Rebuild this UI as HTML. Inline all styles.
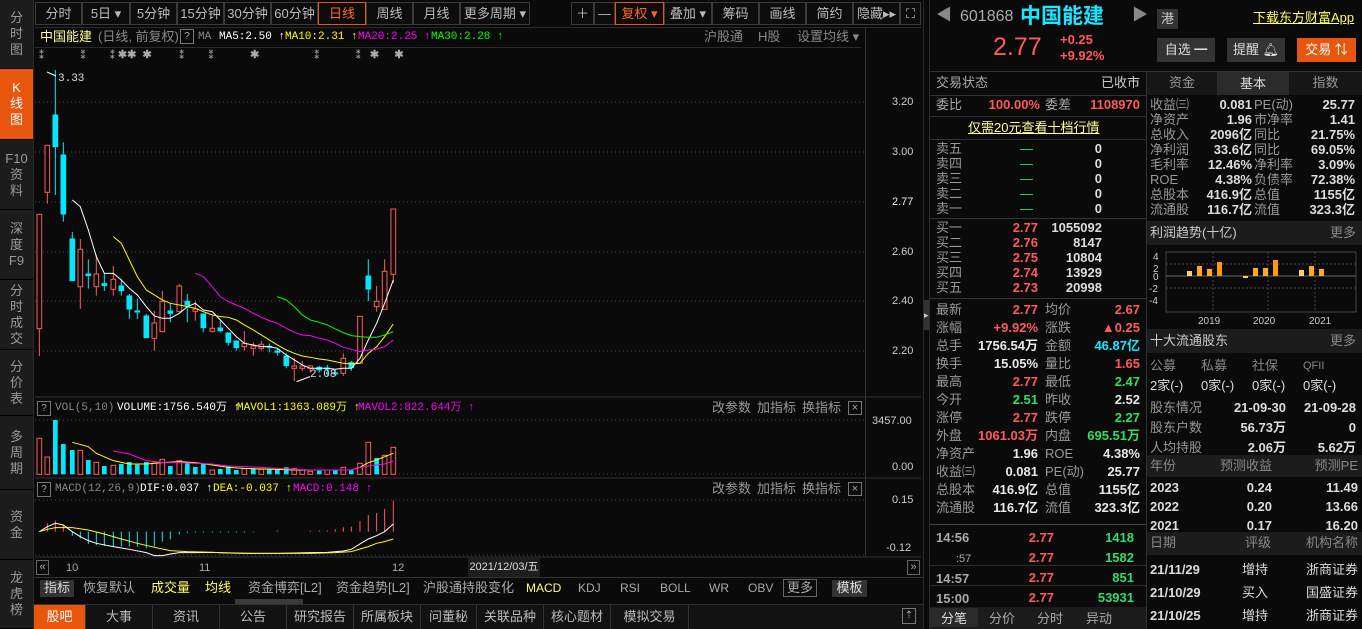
<!DOCTYPE html>
<html><head><meta charset="utf-8">
<style>
*{margin:0;padding:0;box-sizing:border-box}
body{width:1362px;height:629px;background:#0a0a0a;overflow:hidden;position:relative;font-family:"Liberation Sans","Noto Sans CJK SC",sans-serif;font-size:13px;color:#a8a8a8}
.a{position:absolute;white-space:nowrap;line-height:16px}
.r{text-align:right}
.side{position:absolute;left:0;width:33px;background:#1c1c1c;border-bottom:1px solid #000;color:#9a9a9a;font-size:13px;text-align:center;line-height:16px;display:flex;align-items:center;justify-content:center}
.tb{position:absolute;top:2px;height:23px;border:1px solid #3a3a3a;background:#0c0c0c;color:#bbb;font-size:13px;line-height:21px;text-align:center}
.red{color:#ff5a5a}.grn{color:#33dd66}.wht{color:#e8e8e8}.cyn{color:#19e6ff}.yel{color:#ffff66}
.hl{position:absolute;height:1px;background:#333}
.vl{position:absolute;width:1px;background:#333}
.b{font-weight:bold}
.sec{position:absolute;background:#1c1c1c}
.btab{position:absolute;top:605px;height:24px;line-height:24px;text-align:center;color:#bbb;border-right:1px solid #333;background:#121212}
</style></head><body>

<!-- left sidebar -->
<div class="side" style="top:0;height:69px">分<br>时<br>图</div>
<div class="side" style="top:69px;height:71px;background:#e8560d;color:#fff">K<br>线<br>图</div>
<div class="side" style="top:140px;height:70px">F10<br>资<br>料</div>
<div class="side" style="top:210px;height:70px">深<br>度<br>F9</div>
<div class="side" style="top:280px;height:70px">分<br>时<br>成<br>交</div>
<div class="side" style="top:350px;height:66px">分<br>价<br>表</div>
<div class="side" style="top:416px;height:74px">多<br>周<br>期</div>
<div class="side" style="top:490px;height:70px">资<br>金</div>
<div class="side" style="top:560px;height:69px">龙<br>虎<br>榜</div>
<div class="vl" style="left:33px;top:0;height:629px;background:#2a2a2a"></div>

<!-- toolbar -->
<div class="tb" style="left:35px;width:47px">分时</div>
<div class="tb" style="left:82px;width:48px">5日 ▾</div>
<div class="tb" style="left:130px;width:47px">5分钟</div>
<div class="tb" style="left:177px;width:47px">15分钟</div>
<div class="tb" style="left:224px;width:47px">30分钟</div>
<div class="tb" style="left:271px;width:47px">60分钟</div>
<div class="tb" style="left:318px;width:48px;border-color:#e8560d;color:#ff6a1a">日线</div>
<div class="tb" style="left:366px;width:47px">周线</div>
<div class="tb" style="left:413px;width:47px">月线</div>
<div class="tb" style="left:460px;width:70px">更多周期 ▾</div>
<div class="tb" style="left:571px;width:23px">＋</div>
<div class="tb" style="left:594px;width:21px">—</div>
<div class="tb" style="left:615px;width:49px;border-color:#e8560d;color:#ff6a1a">复权 ▾</div>
<div class="tb" style="left:664px;width:48px">叠加 ▾</div>
<div class="tb" style="left:712px;width:47px">筹码</div>
<div class="tb" style="left:759px;width:47px">画线</div>
<div class="tb" style="left:806px;width:47px">简约</div>
<div class="tb" style="left:853px;width:47px">隐藏▸▸</div>
<div class="tb" style="left:900px;width:21px">⛶</div>

<!-- chart header -->
<div class="hl" style="left:35px;top:27px;width:886px;background:#2a2a2a"></div>
<div class="a" style="left:40px;top:29px;color:#ffff99">中国能建</div>
<div class="a" style="left:98px;top:29px;color:#888">(日线, 前复权)</div>
<div class="a" style="left:180px;top:29px;width:14px;height:15px;border:1px solid #777;font-size:10px;line-height:13px;text-align:center;color:#aaa">?</div>
<div class="a" style="left:198px;top:29px;font-family:'Liberation Mono',monospace;font-size:11px;color:#888">MA</div>
<div class="a" style="left:219px;top:29px;font-family:'Liberation Mono',monospace;font-size:11px;color:#fff">MA5:2.50 ↑</div>
<div class="a" style="left:285px;top:29px;font-family:'Liberation Mono',monospace;font-size:11px;color:#ff0">MA10:2.31 ↑</div>
<div class="a" style="left:358px;top:29px;font-family:'Liberation Mono',monospace;font-size:11px;color:#f0f">MA20:2.25 ↑</div>
<div class="a" style="left:431px;top:29px;font-family:'Liberation Mono',monospace;font-size:11px;color:#0f0">MA30:2.28 ↑</div>
<div class="a" style="left:704px;top:29px;color:#888">沪股通</div>
<div class="a" style="left:758px;top:29px;color:#888">H股</div>
<div class="a" style="left:797px;top:29px;color:#888">设置均线 ▾</div>
<div class="hl" style="left:35px;top:47px;width:826px;background:#2a2a2a"></div>
<div class="vl" style="left:865px;top:27px;height:530px"></div>
<div class="a" style="left:36px;top:47px;color:#aaa;font-size:11px;font-weight:bold;letter-spacing:0">⁑&nbsp;&nbsp;&nbsp;&nbsp;&nbsp;&nbsp;&nbsp;&nbsp;&nbsp;&nbsp;⁑&nbsp;&nbsp;&nbsp;&nbsp;&nbsp;&nbsp;⁑✱✱&nbsp;&nbsp;✱&nbsp;&nbsp;&nbsp;&nbsp;&nbsp;&nbsp;&nbsp;&nbsp;⁑&nbsp;&nbsp;&nbsp;&nbsp;&nbsp;&nbsp;⁑&nbsp;&nbsp;&nbsp;&nbsp;&nbsp;&nbsp;&nbsp;&nbsp;&nbsp;&nbsp;&nbsp;✱&nbsp;&nbsp;&nbsp;&nbsp;&nbsp;&nbsp;&nbsp;&nbsp;&nbsp;&nbsp;&nbsp;&nbsp;&nbsp;&nbsp;&nbsp;&nbsp;&nbsp;⁑&nbsp;&nbsp;&nbsp;&nbsp;&nbsp;&nbsp;&nbsp;&nbsp;&nbsp;&nbsp;⁑&nbsp;&nbsp;✱&nbsp;&nbsp;&nbsp;&nbsp;&nbsp;✱</div>

<!-- axis labels -->
<div class="a wht" style="left:892px;top:94px;font-size:11px;color:#ccc">3.20</div>
<div class="a" style="left:892px;top:144px;font-size:11px;color:#ccc">3.00</div>
<div class="a" style="left:892px;top:194px;font-size:11px;color:#eee">2.77</div>
<div class="a" style="left:892px;top:244px;font-size:11px;color:#ccc">2.60</div>
<div class="a" style="left:892px;top:293px;font-size:11px;color:#ccc">2.40</div>
<div class="a" style="left:892px;top:343px;font-size:11px;color:#ccc">2.20</div>
<div class="a" style="left:872px;top:413px;font-size:11px;color:#ccc">3457.00</div>
<div class="a" style="left:892px;top:459px;font-size:11px;color:#ccc">0.00</div>
<div class="a" style="left:892px;top:492px;font-size:11px;color:#ccc">0.15</div>
<div class="a" style="left:886px;top:540px;font-size:11px;color:#ccc">-0.12</div>

<svg style="position:absolute;left:0;top:0" width="930" height="629">
<g stroke="#4a4a4a" stroke-dasharray="1,3">
<line x1="35" x2="865" y1="102" y2="102"/><line x1="35" x2="865" y1="152" y2="152"/><line x1="35" x2="865" y1="202" y2="202"/><line x1="35" x2="865" y1="252" y2="252"/><line x1="35" x2="865" y1="301" y2="301"/><line x1="35" x2="865" y1="351" y2="351"/>
<line x1="35" x2="865" y1="420" y2="420"/><line x1="35" x2="865" y1="474" y2="474"/>
<line x1="35" x2="865" y1="500" y2="500"/><line x1="35" x2="865" y1="555" y2="555"/>
</g>
<line x1="35" x2="921" y1="397" y2="397" stroke="#333"/>
<line x1="35" x2="921" y1="478" y2="478" stroke="#333"/>
<line x1="35" x2="921" y1="557" y2="557" stroke="#333"/>
<!-- candles in zoom coords -->
<g transform="translate(30,100) scale(0.3333)" stroke-width="3">
<g stroke="#ff5a5a" fill="#0a0a0a">
<line x1="28" x2="28" y1="343" y2="768"/><rect x="21" y="343" width="14" height="343"/>
<line x1="52" x2="52" y1="136" y2="311"/><rect x="45" y="136" width="14" height="141"/>
<line x1="151" x2="151" y1="417" y2="627"/><rect x="144" y="448" width="14" height="112"/>
<line x1="199" x2="199" y1="463" y2="587"/><rect x="192" y="522" width="14" height="38"/>
<line x1="250" x2="250" y1="498" y2="587"/><rect x="243" y="538" width="14" height="30"/>
<line x1="373" x2="373" y1="633" y2="752"/><rect x="366" y="669" width="14" height="46"/>
<line x1="397" x2="397" y1="573" y2="697"/><rect x="390" y="604" width="14" height="91"/>
<line x1="448" x2="448" y1="552" y2="635"/><rect x="441" y="558" width="14" height="77"/>
<line x1="496" x2="496" y1="604" y2="662"/><rect x="489" y="627" width="14" height="7"/>
<line x1="547" x2="547" y1="648" y2="697"/><rect x="540" y="685" width="14" height="9"/>
<line x1="643" x2="643" y1="693" y2="752"/><rect x="636" y="730" width="14" height="10"/>
<line x1="670" x2="670" y1="727" y2="767"/><rect x="663" y="738" width="14" height="7"/>
<line x1="694" x2="694" y1="723" y2="752"/><rect x="687" y="733" width="14" height="12"/>
<line x1="793" x2="793" y1="773" y2="843"/><rect x="786" y="798" width="14" height="7"/>
<line x1="817" x2="817" y1="783" y2="813"/><rect x="810" y="798" width="14" height="7"/>
<line x1="841" x2="841" y1="798" y2="818"/><rect x="834" y="798" width="14" height="7"/>
<line x1="940" x2="940" y1="760" y2="828"/><rect x="933" y="775" width="14" height="45"/>
<line x1="990" x2="990" y1="649" y2="790"/><rect x="983" y="649" width="14" height="141"/>
<line x1="1040" x2="1040" y1="558" y2="635"/><rect x="1033" y="604" width="14" height="16"/>
<line x1="1064" x2="1064" y1="478" y2="628"/><rect x="1057" y="514" width="14" height="114"/>
<line x1="1090" x2="1090" y1="327" y2="550"/><rect x="1083" y="327" width="14" height="196"/>
</g>
<g stroke="#00e8ff" fill="#00e8ff">
<line x1="76" x2="76" y1="-90" y2="285"/><rect x="69" y="45" width="14" height="95"/>
<line x1="100" x2="100" y1="127" y2="365"/><rect x="93" y="165" width="14" height="177"/>
<line x1="127" x2="127" y1="396" y2="542"/><rect x="120" y="417" width="14" height="125"/>
<line x1="175" x2="175" y1="478" y2="566"/><rect x="168" y="522" width="14" height="5"/>
<line x1="223" x2="223" y1="520" y2="573"/><rect x="216" y="551" width="14" height="6"/>
<line x1="274" x2="274" y1="538" y2="587"/><rect x="267" y="558" width="14" height="14"/>
<line x1="298" x2="298" y1="582" y2="657"/><rect x="291" y="588" width="14" height="39"/>
<line x1="322" x2="322" y1="596" y2="657"/><rect x="315" y="633" width="14" height="3"/>
<line x1="349" x2="349" y1="642" y2="713"/><rect x="342" y="648" width="14" height="65"/>
<line x1="421" x2="421" y1="610" y2="667"/><rect x="414" y="633" width="14" height="7"/>
<line x1="472" x2="472" y1="582" y2="667"/><rect x="465" y="604" width="14" height="11"/>
<line x1="520" x2="520" y1="642" y2="697"/><rect x="513" y="642" width="14" height="41"/>
<line x1="571" x2="571" y1="663" y2="697"/><rect x="564" y="684" width="14" height="8"/>
<line x1="595" x2="595" y1="699" y2="737"/><rect x="588" y="699" width="14" height="28"/>
<line x1="619" x2="619" y1="723" y2="752"/><rect x="612" y="723" width="14" height="20"/>
<line x1="718" x2="718" y1="730" y2="757"/><rect x="711" y="739" width="14" height="3"/>
<line x1="742" x2="742" y1="743" y2="767"/><rect x="735" y="753" width="14" height="4"/>
<line x1="769" x2="769" y1="760" y2="805"/><rect x="762" y="768" width="14" height="29"/>
<line x1="868" x2="868" y1="798" y2="818"/><rect x="861" y="802" width="14" height="8"/>
<line x1="892" x2="892" y1="795" y2="828"/><rect x="885" y="804" width="14" height="3"/>
<line x1="916" x2="916" y1="810" y2="828"/><rect x="909" y="819" width="14" height="3"/>
<line x1="964" x2="964" y1="783" y2="813"/><rect x="957" y="788" width="14" height="15"/>
<line x1="1015" x2="1015" y1="478" y2="603"/><rect x="1008" y="528" width="14" height="39"/>
</g>
<g fill="none" stroke-width="3">
<polyline stroke="#fff" points="127,300 151,320 175,390 199,470 223,520 250,520 274,540 298,565 322,585 349,620 373,648 397,655 421,655 448,640 472,620 496,610 520,630 547,635 571,660 595,685 619,710 643,730 670,735 694,740 718,740 742,745 769,765 793,780 817,795 841,805 868,805 892,805 916,808 940,805 964,805 990,775 1015,720 1040,670 1064,610 1090,540"/>
<polyline stroke="#ff0" points="250,410 274,430 298,480 322,530 349,570 373,585 397,600 421,610 448,615 472,620 496,625 520,635 547,645 571,650 595,652 619,660 643,675 670,690 694,705 718,720 742,735 769,750 793,760 817,768 841,772 868,777 892,780 916,785 940,790 964,792 990,790 1015,760 1040,740 1064,710 1090,672"/>
<polyline stroke="#f0f" points="496,520 520,530 547,560 571,590 595,605 619,615 643,625 670,640 694,652 718,662 742,670 769,685 793,697 817,705 841,707 868,715 892,720 916,730 940,742 964,748 990,755 1015,750 1040,748 1064,740 1090,720"/>
<polyline stroke="#0f0" points="742,590 769,600 793,620 817,645 841,660 868,667 892,675 916,687 940,698 964,707 990,710 1015,712 1040,712 1064,705 1090,695"/>
<polyline stroke="#fff" points="800,845 840,830"/>
</g>
</g>
<text x="58" y="81" fill="#ddd" font-size="11" font-family="Liberation Mono,monospace">3.33</text>
<polyline points="47,72 56,76" stroke="#fff" fill="none"/>
<text x="310" y="377" fill="#ddd" font-size="11" font-family="Liberation Mono,monospace">2.08</text>
<!-- volume -->
<g transform="translate(30,390) scale(0.3333)" stroke-width="3">
<g stroke="#ff5a5a" fill="#0a0a0a">
<rect x="21" y="145" width="14" height="108"/><rect x="45" y="201" width="14" height="52"/><rect x="144" y="181" width="14" height="72"/><rect x="192" y="217" width="14" height="36"/><rect x="243" y="226" width="14" height="27"/><rect x="366" y="219" width="14" height="34"/><rect x="390" y="208" width="14" height="45"/><rect x="441" y="212" width="14" height="41"/><rect x="540" y="240" width="14" height="13"/><rect x="636" y="236" width="14" height="17"/><rect x="687" y="238" width="14" height="15"/><rect x="786" y="236" width="14" height="17"/><rect x="810" y="240" width="14" height="13"/><rect x="834" y="244" width="14" height="9"/><rect x="885" y="240" width="14" height="13"/><rect x="933" y="232" width="14" height="21"/><rect x="983" y="220" width="14" height="33"/><rect x="1008" y="157" width="14" height="96"/><rect x="1057" y="196" width="14" height="57"/><rect x="1083" y="172" width="14" height="81"/>
</g>
<g fill="#00e8ff">
<rect x="69" y="90" width="14" height="163"/><rect x="93" y="162" width="14" height="91"/><rect x="120" y="180" width="14" height="73"/><rect x="168" y="210" width="14" height="43"/><rect x="216" y="228" width="14" height="25"/><rect x="267" y="222" width="14" height="31"/><rect x="291" y="216" width="14" height="37"/><rect x="315" y="224" width="14" height="29"/><rect x="342" y="216" width="14" height="37"/><rect x="414" y="228" width="14" height="25"/><rect x="465" y="220" width="14" height="33"/><rect x="489" y="231" width="14" height="22"/><rect x="513" y="222" width="14" height="31"/><rect x="564" y="237" width="14" height="16"/><rect x="588" y="229" width="14" height="24"/><rect x="612" y="240" width="14" height="13"/><rect x="663" y="235" width="14" height="18"/><rect x="711" y="238" width="14" height="15"/><rect x="735" y="238" width="14" height="15"/><rect x="762" y="232" width="14" height="21"/><rect x="861" y="242" width="14" height="11"/><rect x="909" y="240" width="14" height="13"/><rect x="957" y="241" width="14" height="12"/><rect x="1033" y="204" width="14" height="49"/>
</g>
<polyline fill="none" stroke="#ff0" points="127,157 175,170 199,190 250,212 298,222 349,222 397,218 448,215 496,218 547,225 595,232 643,235 694,237 742,238 793,240 841,240 892,240 940,240 964,240 990,232 1015,218 1040,210 1064,200 1090,190"/>
<polyline fill="none" stroke="#f0f" points="250,183 298,192 349,212 397,218 448,218 496,220 547,222 595,228 643,230 694,232 742,235 793,238 841,240 892,240 940,240 964,240 990,232 1015,228 1040,225 1064,222 1090,213"/>
<!-- macd -->
<g stroke="#ff5a5a">
<line x1="52" x2="52" y1="400" y2="425"/><line x1="76" x2="76" y1="392" y2="425"/><line x1="100" x2="100" y1="405" y2="425"/>
<line x1="742" x2="742" y1="422" y2="425"/><line x1="841" x2="841" y1="422" y2="425"/><line x1="868" x2="868" y1="422" y2="425"/><line x1="892" x2="892" y1="422" y2="425"/><line x1="916" x2="916" y1="418" y2="425"/><line x1="940" x2="940" y1="412" y2="425"/><line x1="964" x2="964" y1="410" y2="425"/><line x1="990" x2="990" y1="393" y2="425"/><line x1="1015" x2="1015" y1="375" y2="425"/><line x1="1040" x2="1040" y1="369" y2="425"/><line x1="1064" x2="1064" y1="357" y2="425"/><line x1="1090" x2="1090" y1="332" y2="425"/>
</g>
<g stroke="#00e8ff">
<line x1="127" x2="127" y1="425" y2="437"/><line x1="151" x2="151" y1="425" y2="445"/><line x1="175" x2="175" y1="425" y2="462"/><line x1="199" x2="199" y1="425" y2="465"/><line x1="223" x2="223" y1="425" y2="468"/><line x1="250" x2="250" y1="425" y2="470"/><line x1="274" x2="274" y1="425" y2="470"/><line x1="298" x2="298" y1="425" y2="470"/><line x1="322" x2="322" y1="425" y2="470"/><line x1="349" x2="349" y1="425" y2="475"/><line x1="373" x2="373" y1="425" y2="470"/><line x1="397" x2="397" y1="425" y2="455"/><line x1="421" x2="421" y1="425" y2="448"/><line x1="448" x2="448" y1="425" y2="433"/><line x1="472" x2="472" y1="425" y2="429"/><line x1="496" x2="496" y1="425" y2="428"/><line x1="520" x2="520" y1="425" y2="428"/><line x1="547" x2="547" y1="425" y2="428"/><line x1="571" x2="571" y1="425" y2="428"/><line x1="595" x2="595" y1="425" y2="428"/><line x1="619" x2="619" y1="425" y2="428"/><line x1="643" x2="643" y1="425" y2="428"/><line x1="670" x2="670" y1="425" y2="427"/>
</g>
<polyline fill="none" stroke="#fff" points="28,425 52,410 76,400 100,405 127,425 151,440 175,452 199,460 250,470 298,478 349,488 373,497 397,497 421,492 448,488 496,488 547,487 595,489 643,490 694,490 742,490 793,489 841,488 892,487 940,483 964,478 990,462 1015,447 1040,437 1064,425 1090,402"/>
<polyline fill="none" stroke="#ff0" points="28,425 52,418 76,413 127,413 175,420 223,432 274,447 322,460 373,472 421,482 472,485 520,486 571,488 619,489 670,490 742,490 841,490 916,488 964,485 990,477 1015,470 1040,460 1064,455 1090,447"/>
</g>
</svg>

<!-- vol header -->
<div class="a" style="left:37px;top:401px;width:14px;height:15px;border:1px solid #777;font-size:10px;line-height:13px;text-align:center">?</div>
<div class="a" style="left:55px;top:400px;font-family:'Liberation Mono',monospace;font-size:11px;color:#888">VOL(5,10)</div>
<div class="a" style="left:117px;top:400px;font-family:'Liberation Mono',monospace;font-size:11px;color:#fff">VOLUME:1756.540万 ↑</div>
<div class="a" style="left:237px;top:400px;font-family:'Liberation Mono',monospace;font-size:11px;color:#ff0">MAVOL1:1363.089万 ↑</div>
<div class="a" style="left:358px;top:400px;font-family:'Liberation Mono',monospace;font-size:11px;color:#f0f">MAVOL2:822.644万 ↑</div>
<div class="a" style="left:712px;top:400px;color:#999">改参数</div>
<div class="a" style="left:757px;top:400px;color:#999">加指标</div>
<div class="a" style="left:802px;top:400px;color:#999">换指标</div>
<div class="a" style="left:848px;top:401px;width:14px;height:14px;border:1px solid #777;font-size:11px;line-height:12px;text-align:center">×</div>
<div class="a" style="left:37px;top:482px;width:14px;height:15px;border:1px solid #777;font-size:10px;line-height:13px;text-align:center">?</div>
<div class="a" style="left:55px;top:481px;font-family:'Liberation Mono',monospace;font-size:11px;color:#888">MACD(12,26,9)</div>
<div class="a" style="left:140px;top:481px;font-family:'Liberation Mono',monospace;font-size:11px;color:#fff">DIF:0.037 ↑</div>
<div class="a" style="left:213px;top:481px;font-family:'Liberation Mono',monospace;font-size:11px;color:#ff0">DEA:-0.037 ↑</div>
<div class="a" style="left:293px;top:481px;font-family:'Liberation Mono',monospace;font-size:11px;color:#f0f">MACD:0.148 ↑</div>
<div class="a" style="left:712px;top:481px;color:#999">改参数</div>
<div class="a" style="left:757px;top:481px;color:#999">加指标</div>
<div class="a" style="left:802px;top:481px;color:#999">换指标</div>
<div class="a" style="left:848px;top:482px;width:14px;height:14px;border:1px solid #777;font-size:11px;line-height:12px;text-align:center">×</div>

<!-- date axis -->
<div class="a" style="left:36px;top:560px;width:13px;height:15px;border:1px solid #666;font-size:11px;line-height:13px;text-align:center">«</div>
<div class="a" style="left:66px;top:560px;font-size:11px;color:#aaa">10</div>
<div class="a" style="left:199px;top:560px;font-size:11px;color:#aaa">11</div>
<div class="a" style="left:392px;top:560px;font-size:11px;color:#aaa">12</div>
<div class="a" style="left:468px;top:558px;width:72px;height:19px;background:#1e1e1e;line-height:19px;text-align:center;font-size:11px;color:#ddd">2021/12/03/五</div>
<div class="a" style="left:907px;top:560px;width:13px;height:15px;border:1px solid #666;font-size:11px;line-height:13px;text-align:center">»</div>
<div class="hl" style="left:33px;top:577px;width:890px"></div>

<!-- indicator bar -->
<div class="a" style="left:40px;top:580px;width:34px;height:17px;background:#333;color:#ddd;text-align:center">指标</div>
<div class="a" style="left:83px;top:580px;color:#aaa">恢复默认</div>
<div class="a" style="left:151px;top:580px;color:#ffff66">成交量</div>
<div class="a" style="left:205px;top:580px;color:#ffff66">均线</div>
<div class="a" style="left:248px;top:580px;color:#aaa">资金博弈[L2]</div>
<div class="a" style="left:336px;top:580px;color:#aaa">资金趋势[L2]</div>
<div class="a" style="left:423px;top:580px;color:#aaa">沪股通持股变化</div>
<div class="a" style="left:526px;top:580px;color:#ffff66;font-size:12px">MACD</div>
<div class="a" style="left:578px;top:580px;color:#aaa;font-size:12px">KDJ</div>
<div class="a" style="left:620px;top:580px;color:#aaa;font-size:12px">RSI</div>
<div class="a" style="left:660px;top:580px;color:#aaa;font-size:12px">BOLL</div>
<div class="a" style="left:709px;top:580px;color:#aaa;font-size:12px">WR</div>
<div class="a" style="left:748px;top:580px;color:#aaa;font-size:12px">OBV</div>
<div class="a" style="left:783px;top:579px;width:34px;height:18px;border:1px solid #666;color:#aaa;text-align:center">更多</div>
<div class="a" style="left:832px;top:580px;width:35px;height:17px;background:#333;color:#ddd;text-align:center">模板</div>
<div class="a" style="left:235px;top:599px;width:68px;height:6px;background:#3a3a3a"></div>

<!-- bottom tabs -->
<div class="hl" style="left:33px;top:604px;width:890px"></div>
<div class="btab" style="left:34px;width:52px;background:#e8560d;color:#fff">股吧</div>
<div class="btab" style="left:86px;width:67px">大事</div>
<div class="btab" style="left:153px;width:67px">资讯</div>
<div class="btab" style="left:220px;width:67px">公告</div>
<div class="btab" style="left:287px;width:67px">研究报告</div>
<div class="btab" style="left:354px;width:67px">所属板块</div>
<div class="btab" style="left:421px;width:56px">问董秘</div>
<div class="btab" style="left:477px;width:67px">关联品种</div>
<div class="btab" style="left:544px;width:67px">核心题材</div>
<div class="btab" style="left:611px;width:78px">模拟交易</div>
<div class="btab" style="left:689px;width:234px;border:none"></div>
<div class="a" style="left:902px;top:608px;width:14px;height:16px;border:1px solid #777;font-size:10px;line-height:14px;text-align:center">⇡</div>

<!-- divider strip -->
<div class="vl" style="left:923px;top:0;height:629px;background:#2a2a2a"></div>
<div class="a" style="left:924px;top:300px;width:6px;height:30px;background:#333;color:#ccc;font-size:9px;line-height:30px">▸</div>
<div class="vl" style="left:929px;top:0;height:629px;background:#2a2a2a"></div>

<!-- right header -->
<div class="a" style="left:936px;top:8px;font-size:16px;color:#888">◀</div>
<div class="a" style="left:960px;top:9px;font-size:16px;color:#aaa">601868</div>
<div class="a" style="left:1020px;top:5px;font-size:21px;line-height:24px;color:#19e6ff;font-weight:bold">中国能建</div>
<div class="a" style="left:1132px;top:8px;font-size:16px;color:#888">▶</div>
<div class="a" style="left:1157px;top:9px;width:21px;height:20px;background:#333;color:#ccc;text-align:center;line-height:20px">港</div>
<div class="a" style="left:1253px;top:10px;color:#ffff66;text-decoration:underline">下载东方财富App</div>
<div class="a" style="left:993px;top:34px;font-size:25px;line-height:26px;color:#ff5a5a">2.77</div>
<div class="a red b" style="left:1060px;top:32px">+0.25</div>
<div class="a red b" style="left:1060px;top:48px">+9.92%</div>
<div class="a" style="left:1157px;top:38px;width:58px;height:24px;background:#333;color:#ddd;text-align:center;line-height:24px">自选 ━</div>
<div class="a" style="left:1227px;top:38px;width:58px;height:24px;background:#333;color:#ddd;text-align:center;line-height:24px">提醒 🔔︎</div>
<div class="a" style="left:1297px;top:38px;width:59px;height:24px;background:#e8560d;color:#fff;text-align:center;line-height:24px">交易 ⇅</div>
<div class="hl" style="left:930px;top:71px;width:432px"></div>
<div class="vl" style="left:1146px;top:71px;height:558px"></div>

<!-- left col -->
<div class="a" style="left:936px;top:75px;color:#aaa">交易状态</div>
<div class="a r" style="left:1040px;width:100px;top:75px;color:#ccc">已收市</div>
<div class="hl" style="left:930px;top:95px;width:216px"></div>
<div class="a" style="left:936px;top:97px">委比</div>
<div class="a red b r" style="left:970px;width:70px;top:97px">100.00%</div>
<div class="a" style="left:1045px;top:97px">委差</div>
<div class="a red b r" style="left:1070px;width:70px;top:97px">1108970</div>
<div class="hl" style="left:930px;top:116px;width:216px"></div>
<div class="a" style="left:968px;top:120px;color:#ffff99;text-decoration:underline">仅需20元查看十档行情</div>
<div class="hl" style="left:930px;top:139px;width:216px"></div>
<div style="position:absolute;left:936px;top:141px;line-height:15px;color:#999">卖五<br>卖四<br>卖三<br>卖二<br>卖一</div>
<div style="position:absolute;left:1020px;top:141px;line-height:15px;color:#33dd66">—<br>—<br>—<br>—<br>—</div>
<div style="position:absolute;left:1080px;width:22px;text-align:right;top:141px;line-height:15px;color:#ddd;font-weight:bold">0<br>0<br>0<br>0<br>0</div>
<div class="hl" style="left:930px;top:218px;width:216px"></div>
<div style="position:absolute;left:936px;top:220px;line-height:15px;color:#999">买一<br>买二<br>买三<br>买四<br>买五</div>
<div style="position:absolute;left:990px;width:48px;text-align:right;top:220px;line-height:15px;color:#ff5a5a;font-weight:bold">2.77<br>2.76<br>2.75<br>2.74<br>2.73</div>
<div style="position:absolute;left:1040px;width:62px;text-align:right;top:220px;line-height:15px;color:#ddd;font-weight:bold">1055092<br>8147<br>10804<br>13929<br>20998</div>
<div class="hl" style="left:930px;top:298px;width:216px"></div>
<div style="position:absolute;left:936px;top:301px;line-height:18px;color:#999">最新<br>涨幅<br>总手<br>换手<br>最高<br>今开<br>涨停<br>外盘<br>净资产<br>收益㈢<br>总股本<br>流通股</div>
<div style="position:absolute;left:960px;width:78px;text-align:right;top:301px;line-height:18px;font-weight:bold"><span class="red">2.77</span><br><span class="red">+9.92%</span><br><span class="wht">1756.54万</span><br><span class="wht">15.05%</span><br><span class="red">2.77</span><br><span class="grn">2.51</span><br><span class="red">2.77</span><br><span class="red">1061.03万</span><br><span class="wht">1.96</span><br><span class="wht">0.081</span><br><span class="wht">416.9亿</span><br><span class="wht">116.7亿</span></div>
<div style="position:absolute;left:1045px;top:301px;line-height:18px;color:#999">均价<br>涨跌<br>金额<br>量比<br>最低<br>昨收<br>跌停<br>内盘<br>ROE<br>PE(动)<br>总值<br>流值</div>
<div style="position:absolute;left:1070px;width:70px;text-align:right;top:301px;line-height:18px;font-weight:bold"><span class="red">2.67</span><br><span class="red">▲0.25</span><br><span class="cyn">46.87亿</span><br><span class="red">1.65</span><br><span class="grn">2.47</span><br><span class="wht">2.52</span><br><span class="grn">2.27</span><br><span class="grn">695.51万</span><br><span class="wht">4.38%</span><br><span class="wht">25.77</span><br><span class="wht">1155亿</span><br><span class="wht">323.3亿</span></div>
<div class="hl" style="left:930px;top:524px;width:216px;background:#444"></div>
<div style="position:absolute;left:936px;top:528px;line-height:20px;color:#aaa;font-weight:bold">14:56<br><span style="font-weight:normal;font-size:11px;padding-left:20px">:57</span><br>14:57<br>15:00</div>
<div style="position:absolute;left:1000px;width:54px;text-align:right;top:528px;line-height:20px;color:#ff5a5a;font-weight:bold">2.77<br>2.77<br>2.77<br>2.77</div>
<div style="position:absolute;left:1070px;width:64px;text-align:right;top:528px;line-height:20px;color:#33dd66;font-weight:bold">1418<br>1582<br>851<br>53931</div>
<div class="hl" style="left:930px;top:565px;width:216px;background:#444;opacity:.6"></div>
<div class="hl" style="left:930px;top:585px;width:216px;background:#444;opacity:.6"></div>
<div class="sec" style="left:930px;top:607px;width:216px;height:22px"></div>
<div class="a" style="left:930px;top:610px;width:48px;text-align:center;color:#ddd;background:#2a2a2a;height:19px;top:608px;line-height:21px">分笔</div>
<div class="a" style="left:978px;top:608px;width:48px;text-align:center;line-height:21px">分价</div>
<div class="a" style="left:1026px;top:608px;width:48px;text-align:center;line-height:21px">分时</div>
<div class="a" style="left:1074px;top:608px;width:50px;text-align:center;line-height:21px">异动</div>

<!-- right col -->
<div class="sec" style="left:1147px;top:72px;width:215px;height:23px;background:#161616"></div>
<div class="a" style="left:1147px;top:75px;width:70px;text-align:center;color:#999">资金</div>
<div class="a" style="left:1217px;top:72px;width:72px;height:23px;background:#2a2a2a;line-height:23px;text-align:center;color:#ddd">基本</div>
<div class="a" style="left:1289px;top:75px;width:73px;text-align:center;color:#999">指数</div>
<div style="position:absolute;left:1150px;top:97px;line-height:15px;color:#999">收益㈢<br>净资产<br>总收入<br>净利润<br>毛利率<br>ROE<br>总股本<br>流通股</div>
<div style="position:absolute;left:1190px;width:62px;text-align:right;top:97px;line-height:15px;color:#ddd;font-weight:bold">0.081<br>1.96<br>2096亿<br>33.6亿<br>12.46%<br>4.38%<br>416.9亿<br>116.7亿</div>
<div style="position:absolute;left:1254px;top:97px;line-height:15px;color:#999">PE(动)<br>市净率<br>同比<br>同比<br>净利率<br>负债率<br>总值<br>流值</div>
<div style="position:absolute;left:1290px;width:65px;text-align:right;top:97px;line-height:15px;color:#ddd;font-weight:bold">25.77<br>1.41<br>21.75%<br>69.05%<br>3.09%<br>72.38%<br>1155亿<br>323.3亿</div>
<div class="sec" style="left:1147px;top:221px;width:215px;height:24px"></div>
<div class="a" style="left:1150px;top:225px;color:#ccc">利润趋势(十亿)</div>
<div class="a" style="left:1330px;top:225px;color:#888">更多</div>
<svg style="position:absolute;left:1147px;top:246px" width="215" height="83">
<rect x="19" y="6" width="190" height="60" fill="none" stroke="#444"/>
<g stroke="#444" stroke-dasharray="2,2"><line x1="19" x2="209" y1="18" y2="18"/><line x1="19" x2="209" y1="42" y2="42"/><line x1="66" x2="66" y1="6" y2="66"/><line x1="121" x2="121" y1="6" y2="66"/><line x1="168" x2="168" y1="6" y2="66"/></g>
<line x1="19" x2="209" y1="30" y2="30" stroke="#666"/>
<g font-size="10" fill="#ccc" font-family="Liberation Sans"><text x="6" y="14">4</text><text x="6" y="26">2</text><text x="6" y="34">0</text><text x="2" y="46">-2</text><text x="2" y="58">-4</text><text x="51" y="78">2019</text><text x="106" y="78">2020</text><text x="162" y="78">2021</text></g>
<rect x="40" y="25" width="5" height="5" fill="#ffcc66"/><rect x="50" y="20" width="5" height="10" fill="#ffaa22"/><rect x="60" y="23" width="5" height="7" fill="#ffaa22"/><rect x="70" y="16" width="5" height="14" fill="#ff9900"/>
<rect x="96" y="30" width="5" height="2" fill="#ffcc66"/><rect x="106" y="22" width="5" height="8" fill="#ffaa22"/><rect x="116" y="22" width="5" height="8" fill="#ffaa22"/><rect x="126" y="14" width="5" height="16" fill="#ff9900"/>
<rect x="152" y="24" width="5" height="6" fill="#ffcc66"/><rect x="162" y="20" width="5" height="10" fill="#ffaa22"/><rect x="172" y="23" width="5" height="7" fill="#ffaa22"/>
</svg>
<div class="sec" style="left:1147px;top:329px;width:215px;height:24px"></div>
<div class="a" style="left:1150px;top:333px;color:#ccc">十大流通股东</div>
<div class="a" style="left:1330px;top:333px;color:#888">更多</div>
<div class="a" style="left:1150px;top:358px;color:#888">公募</div>
<div class="a" style="left:1201px;top:358px;color:#888">私募</div>
<div class="a" style="left:1252px;top:358px;color:#888">社保</div>
<div class="a" style="left:1303px;top:358px;color:#888;font-size:11px">QFII</div>
<div class="a" style="left:1150px;top:378px;color:#ddd">2家(-)</div>
<div class="a" style="left:1201px;top:378px;color:#ddd">0家(-)</div>
<div class="a" style="left:1252px;top:378px;color:#ddd">0家(-)</div>
<div class="a" style="left:1303px;top:378px;color:#ddd">0家(-)</div>
<div style="position:absolute;left:1150px;top:398px;line-height:20px;color:#999">股东情况<br>股东户数<br>人均持股</div>
<div style="position:absolute;left:1220px;width:66px;text-align:right;top:398px;line-height:20px;color:#ddd;font-weight:bold">21-09-30<br>56.73万<br>2.06万</div>
<div style="position:absolute;left:1290px;width:66px;text-align:right;top:398px;line-height:20px;color:#ddd;font-weight:bold">21-09-28<br>0<br>5.62万</div>
<div class="sec" style="left:1147px;top:455px;width:215px;height:22px"></div>
<div class="a" style="left:1150px;top:458px;color:#888">年份</div>
<div class="a" style="left:1220px;top:458px;color:#888">预测收益</div>
<div class="a r" style="left:1290px;width:68px;top:458px;color:#888">预测PE</div>
<div style="position:absolute;left:1150px;top:478px;line-height:19px;color:#ddd;font-weight:bold">2023<br>2022<br>2021</div>
<div style="position:absolute;left:1220px;width:52px;text-align:right;top:478px;line-height:19px;color:#ddd;font-weight:bold">0.24<br>0.20<br>0.17</div>
<div style="position:absolute;left:1300px;width:58px;text-align:right;top:478px;line-height:19px;color:#ddd;font-weight:bold">11.49<br>13.66<br>16.20</div>
<div class="sec" style="left:1147px;top:532px;width:215px;height:23px"></div>
<div class="a" style="left:1150px;top:535px;color:#888">日期</div>
<div class="a" style="left:1245px;top:535px;color:#888">评级</div>
<div class="a r" style="left:1290px;width:68px;top:535px;color:#888">机构名称</div>
<div style="position:absolute;left:1150px;top:558px;line-height:23px;color:#ddd;font-weight:bold">21/11/29<br>21/10/29<br>21/10/25</div>
<div style="position:absolute;left:1242px;top:558px;line-height:23px;color:#ddd">增持<br>买入<br>增持</div>
<div style="position:absolute;left:1290px;width:68px;text-align:right;top:558px;line-height:23px;color:#ddd">浙商证券<br>国盛证券<br>浙商证券</div>
</body></html>
